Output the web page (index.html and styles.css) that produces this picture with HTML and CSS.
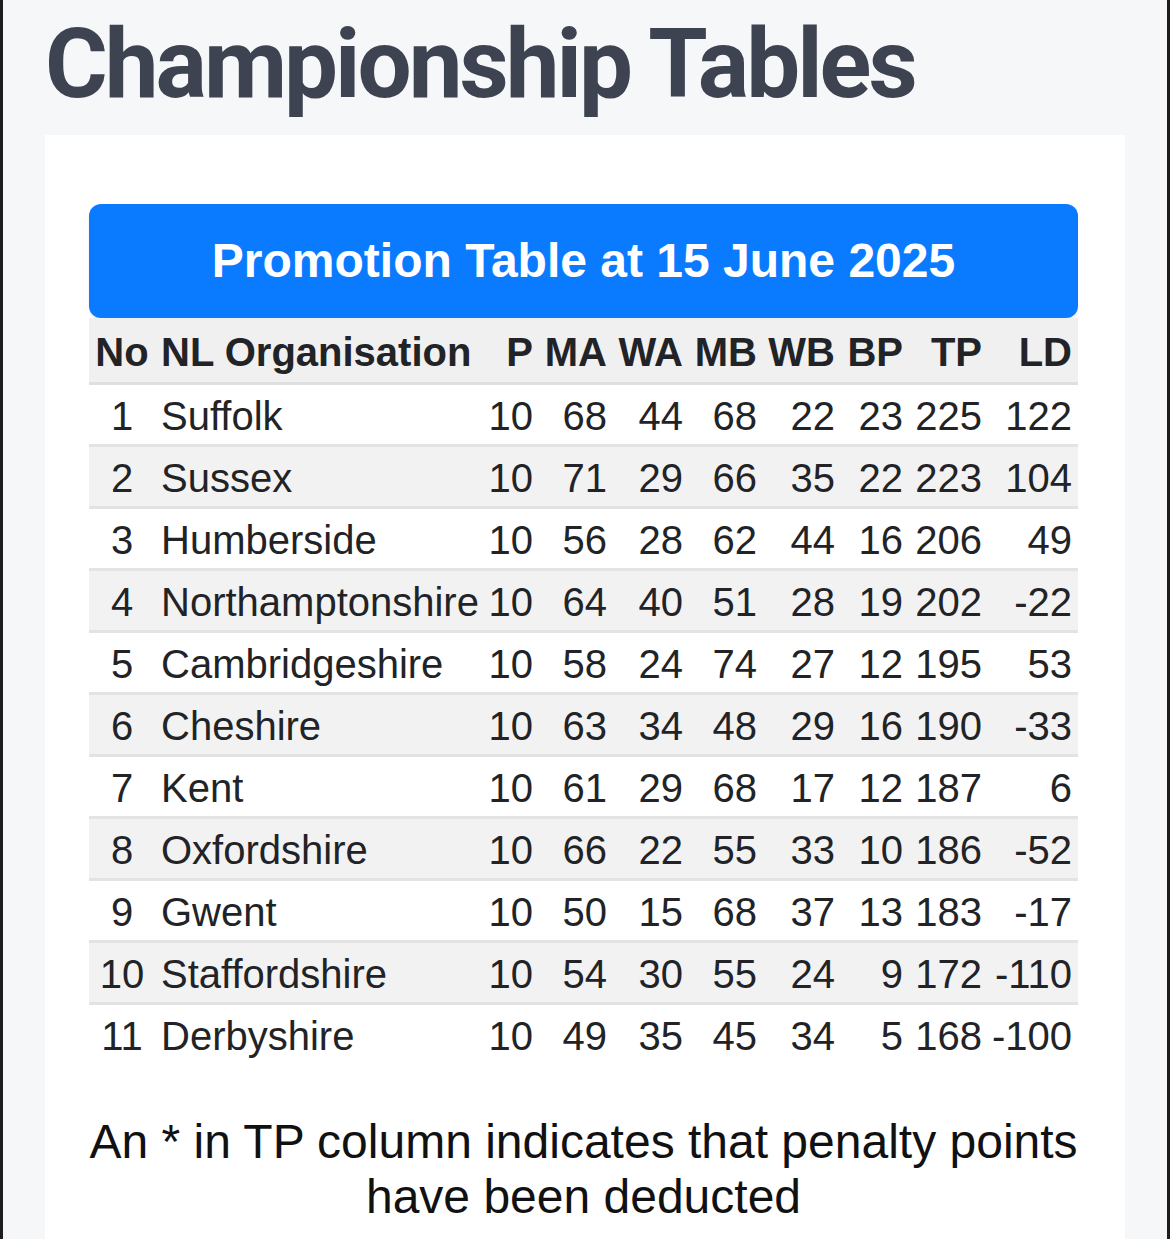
FILE: index.html
```html
<!DOCTYPE html>
<html lang="en">
<head>
<meta charset="utf-8">
<title>Championship Tables</title>
<link rel="stylesheet" href="styles.css">
</head>
<body>
<h1 class="page-title">Championship Tables</h1>
<section class="card">
  <div class="table-banner">Promotion Table at 15 June 2025</div>
  <table class="standings">
    <colgroup>
      <col class="c-no"><col class="c-org"><col class="c-p"><col class="c-ma"><col class="c-wa"><col class="c-mb"><col class="c-wb"><col class="c-bp"><col class="c-tp"><col class="c-ld">
    </colgroup>
    <thead>
      <tr><th class="no">No</th><th class="org">NL Organisation</th><th>P</th><th>MA</th><th>WA</th><th>MB</th><th>WB</th><th>BP</th><th>TP</th><th>LD</th></tr>
    </thead>
    <tbody>
      <tr><td class="no">1</td><td class="org">Suffolk</td><td>10</td><td>68</td><td>44</td><td>68</td><td>22</td><td>23</td><td>225</td><td>122</td></tr>
      <tr><td class="no">2</td><td class="org">Sussex</td><td>10</td><td>71</td><td>29</td><td>66</td><td>35</td><td>22</td><td>223</td><td>104</td></tr>
      <tr><td class="no">3</td><td class="org">Humberside</td><td>10</td><td>56</td><td>28</td><td>62</td><td>44</td><td>16</td><td>206</td><td>49</td></tr>
      <tr><td class="no">4</td><td class="org">Northamptonshire</td><td>10</td><td>64</td><td>40</td><td>51</td><td>28</td><td>19</td><td>202</td><td>-22</td></tr>
      <tr><td class="no">5</td><td class="org">Cambridgeshire</td><td>10</td><td>58</td><td>24</td><td>74</td><td>27</td><td>12</td><td>195</td><td>53</td></tr>
      <tr><td class="no">6</td><td class="org">Cheshire</td><td>10</td><td>63</td><td>34</td><td>48</td><td>29</td><td>16</td><td>190</td><td>-33</td></tr>
      <tr><td class="no">7</td><td class="org">Kent</td><td>10</td><td>61</td><td>29</td><td>68</td><td>17</td><td>12</td><td>187</td><td>6</td></tr>
      <tr><td class="no">8</td><td class="org">Oxfordshire</td><td>10</td><td>66</td><td>22</td><td>55</td><td>33</td><td>10</td><td>186</td><td>-52</td></tr>
      <tr><td class="no">9</td><td class="org">Gwent</td><td>10</td><td>50</td><td>15</td><td>68</td><td>37</td><td>13</td><td>183</td><td>-17</td></tr>
      <tr><td class="no">10</td><td class="org">Staffordshire</td><td>10</td><td>54</td><td>30</td><td>55</td><td>24</td><td>9</td><td>172</td><td>-110</td></tr>
      <tr><td class="no">11</td><td class="org">Derbyshire</td><td>10</td><td>49</td><td>35</td><td>45</td><td>34</td><td>5</td><td>168</td><td>-100</td></tr>
    </tbody>
  </table>
  <p class="note">An * in TP column indicates that penalty points have been deducted</p>
</section>
</body>
</html>
```
FILE: styles.css
```css
html, body {
  margin: 0;
  padding: 0;
}
body {
  background: #f6f7f9;
  border-left: 3px solid #1d1d1f;
  border-right: 3px solid #1d1d1f;
  padding: 0 42px;
  min-height: 1239px;
  box-sizing: border-box;
}
.page-title {
  margin: 0;
  padding-top: 8px;
  font-family: Roboto, "Liberation Sans", sans-serif;
  font-weight: 700;
  font-size: 96px;
  letter-spacing: -3px;
  line-height: normal;
  color: #3d4350;
  height: 127px;
}
.card {
  background: #ffffff;
  padding: 69px 47px 40px 44px;
}
.table-banner {
  background: #0a7bff;
  color: #ffffff;
  font-family: "Liberation Sans", Arial, sans-serif;
  font-weight: 700;
  font-size: 48px;
  line-height: 55px;
  text-align: center;
  padding: 29px 0 30px;
  border-radius: 12px;
  box-shadow: 0 2px 2px rgba(120, 90, 60, 0.12);
}
.standings {
  width: 989px;
  table-layout: fixed;
  border-collapse: collapse;
  font-family: "Liberation Sans", Arial, sans-serif;
  font-size: 40px;
  line-height: 46px;
  color: #222326;
}
.c-no { width: 66px; }
.c-org { width: 327px; }
.c-p { width: 57px; }
.c-ma { width: 74px; }
.c-wa { width: 76px; }
.c-mb { width: 74px; }
.c-wb { width: 78px; }
.c-bp { width: 68px; }
.c-tp { width: 79px; }
.c-ld { width: 90px; }
.standings th,
.standings td {
  padding: 8px 6px 5px 0;
  text-align: right;
  white-space: nowrap;
  overflow: visible;
}
.standings th {
  background: #f0f0f1;
  font-weight: 700;
  padding-top: 11px;
  padding-bottom: 7px;
  border-bottom: 3px solid #dedfe1;
}
.standings .no {
  text-align: center;
  padding: 8px 0 5px 0;
}
.standings th.no {
  padding: 11px 0 7px;
}
.standings .org {
  text-align: left;
  padding-left: 6px;
  padding-right: 0;
}
.standings tbody tr:nth-child(even) td {
  background: #f2f2f3;
}
.standings tbody tr:not(:last-child) td {
  border-bottom: 3px solid #e2e3e5;
}
.note {
  margin: 50px 0 0;
  font-family: "Liberation Sans", Arial, sans-serif;
  font-size: 48px;
  line-height: 55px;
  text-align: center;
  color: #111111;
}
```
